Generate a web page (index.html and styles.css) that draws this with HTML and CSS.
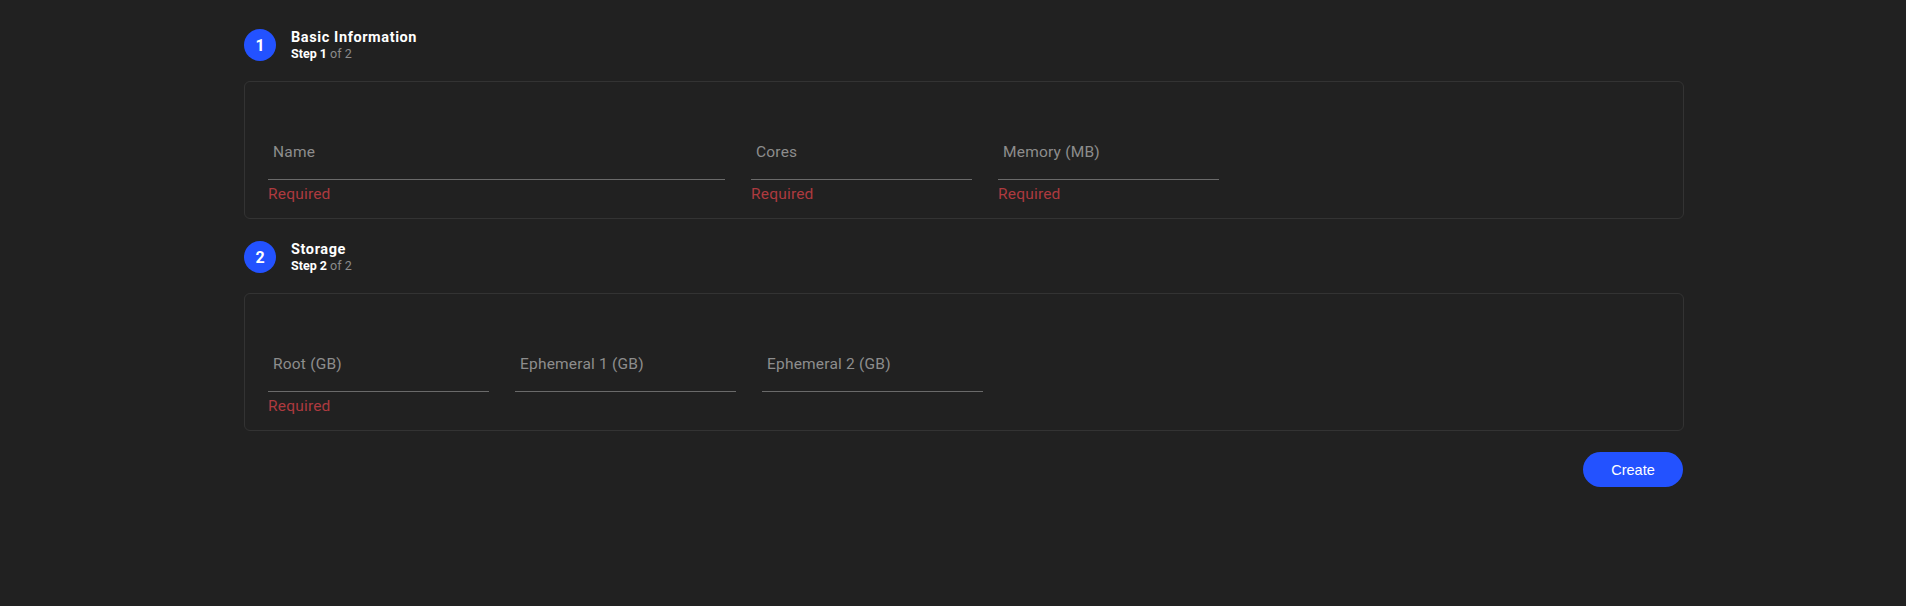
FILE: index.html
```html
<!DOCTYPE html>
<html lang="en">
<head>
    <meta charset="UTF-8">
    <meta name="viewport" content="width=device-width, initial-scale=1.0">
    <title>Create Instance</title>
    <link rel="stylesheet" href="styles.css">
</head>
<body>
    <div class="page">
        <div class="step-header">
            <div class="step-badge">1</div>
            <div class="step-text">
                <div class="step-title">Basic Information</div>
                <div class="step-sub"><b>Step 1</b> of 2</div>
            </div>
        </div>
        <div class="card">
            <div class="field field-wide">
                <div class="field-input">Name</div>
                <div class="field-helper">Required</div>
            </div>
            <div class="field">
                <div class="field-input">Cores</div>
                <div class="field-helper">Required</div>
            </div>
            <div class="field">
                <div class="field-input">Memory (MB)</div>
                <div class="field-helper">Required</div>
            </div>
        </div>

        <div class="step-header step-next">
            <div class="step-badge">2</div>
            <div class="step-text">
                <div class="step-title">Storage</div>
                <div class="step-sub"><b>Step 2</b> of 2</div>
            </div>
        </div>
        <div class="card">
            <div class="field">
                <div class="field-input">Root (GB)</div>
                <div class="field-helper">Required</div>
            </div>
            <div class="field">
                <div class="field-input">Ephemeral 1 (GB)</div>
                <div class="field-helper"></div>
            </div>
            <div class="field">
                <div class="field-input">Ephemeral 2 (GB)</div>
                <div class="field-helper"></div>
            </div>
        </div>

        <div class="actions">
            <button class="btn-create">Create</button>
        </div>
    </div>
</body>
</html>
```

FILE: styles.css
```css
body {
    margin: 0;
    min-height: 100vh;
    background-color: #212121;
    font-family: Roboto, "Noto Sans", sans-serif;
    color: #fff;
}

.page {
    width: 1440px;
    padding: 29px 0 0 244px;
}

.step-header {
    display: flex;
    align-items: flex-start;
    margin-bottom: 20px;
}

.step-next {
    margin-top: 22px;
}

.step-badge {
    width: 32px;
    height: 32px;
    border-radius: 50%;
    background-color: #2352ff;
    color: #fff;
    font-weight: 700;
    font-size: 16px;
    display: flex;
    align-items: center;
    justify-content: center;
    margin-right: 15px;
}

.step-text {
    padding-top: 1px;
}

.step-title {
    font-size: 14.5px;
    line-height: 16px;
    font-weight: 700;
    letter-spacing: 0.6px;
}

.step-sub {
    font-size: 12.5px;
    line-height: 14px;
    color: #8c8c8c;
    margin-top: 1px;
}

.step-sub b {
    color: #fff;
    font-weight: 700;
}

.card {
    border: 1px solid #333;
    border-radius: 6px;
    padding: 24px 23px 14px;
    display: flex;
    gap: 26px;
}

.field {
    width: 221px;
}

.field-wide {
    width: 457px;
}

.field-input {
    height: 74px;
    box-sizing: border-box;
    border-bottom: 1px solid #6a6a6a;
    display: flex;
    align-items: flex-end;
    padding: 0 5px 17px;
    font-size: 15.5px;
    line-height: 19px;
    color: #8d8d8d;
    letter-spacing: 0.2px;
}

.field-helper {
    margin-top: 5px;
    height: 19px;
    font-size: 15.5px;
    line-height: 19px;
    color: #ad3a3f;
    letter-spacing: 0.2px;
}

.actions {
    display: flex;
    justify-content: flex-end;
    margin-top: 21px;
    padding-right: 1px;
}

.btn-create {
    width: 100px;
    height: 35px;
    border: none;
    border-radius: 18px;
    background-color: #2352ff;
    color: #fff;
    font-family: "Liberation Sans", Arial, sans-serif;
    font-size: 14.5px;
    cursor: pointer;
}
```
